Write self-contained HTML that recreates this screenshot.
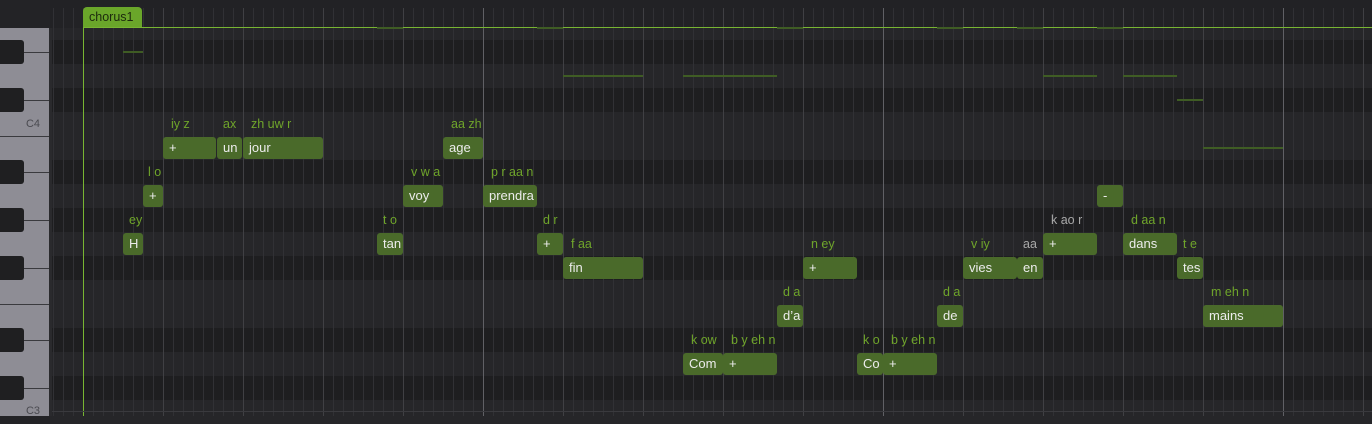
<!DOCTYPE html>
<html><head><style>
*{margin:0;padding:0;box-sizing:border-box}
body{width:1372px;height:416px;overflow:hidden;background:#232326;font-family:"Liberation Sans",sans-serif;position:relative}
#grid{position:absolute;left:50px;top:0;width:1322px;height:416px;
background:
repeating-linear-gradient(90deg,transparent 0,transparent 3px,#313135 3px,#313135 4px,transparent 4px,transparent 10px);
}
.row{position:absolute;left:50px;width:1322px;height:24px}
.blk{background:#1e1e20}
.wht{background:#262629}
.vl{position:absolute;top:8px;bottom:0;width:1px}
.key{position:absolute;left:0;width:49px;background:#8e8d95}
.bk{position:absolute;left:0;width:24px;height:24px;background:#1f1f21;border-radius:0 3px 3px 0}
.sep{position:absolute;left:0;width:49px;height:1px;background:#3a3a3e}
.n{position:absolute;height:22px;background:#4a6a2a;border-radius:3px;color:#ececec;font-size:13px;line-height:22px;padding-left:6px;white-space:nowrap;overflow:hidden}
.l{position:absolute;color:#6fa52a;font-size:12.5px;white-space:nowrap}
.g{color:#a8a8a8}
.p{position:absolute;height:2px;background:#3f5c24}
.lab{position:absolute;left:0;width:40px;text-align:right;font-size:11px;color:#4a4a50}
</style></head><body>
<div class="row" style="top:0;height:28px;background:#222225"></div>
<div class="row wht" style="top:28px;height:12px"></div>
<div class="row blk" style="top:40px"></div>
<div class="row wht" style="top:64px"></div>
<div class="row blk" style="top:88px"></div>
<div class="row wht" style="top:112px"></div>
<div class="row wht" style="top:136px"></div>
<div class="row blk" style="top:160px"></div>
<div class="row wht" style="top:184px"></div>
<div class="row blk" style="top:208px"></div>
<div class="row wht" style="top:232px"></div>
<div class="row blk" style="top:256px"></div>
<div class="row wht" style="top:280px"></div>
<div class="row wht" style="top:304px"></div>
<div class="row blk" style="top:328px"></div>
<div class="row wht" style="top:352px"></div>
<div class="row blk" style="top:376px"></div>
<div class="row wht" style="top:400px"></div>
<div id="grid"></div>
<div style="position:absolute;left:50px;top:0;width:1322px;height:8px;background:#222225"></div>
<div class="vl" style="left:163px;background:#404044"></div>
<div class="vl" style="left:243px;background:#404044"></div>
<div class="vl" style="left:323px;background:#404044"></div>
<div class="vl" style="left:403px;background:#404044"></div>
<div class="vl" style="left:483px;background:#606065"></div>
<div class="vl" style="left:563px;background:#404044"></div>
<div class="vl" style="left:643px;background:#404044"></div>
<div class="vl" style="left:723px;background:#404044"></div>
<div class="vl" style="left:803px;background:#404044"></div>
<div class="vl" style="left:883px;background:#606065"></div>
<div class="vl" style="left:963px;background:#404044"></div>
<div class="vl" style="left:1043px;background:#404044"></div>
<div class="vl" style="left:1123px;background:#404044"></div>
<div class="vl" style="left:1203px;background:#404044"></div>
<div class="vl" style="left:1283px;background:#606065"></div>
<div class="vl" style="left:1363px;background:#404044"></div>
<div class="vl" style="left:83px;top:27px;background:#78b532"></div>
<div style="position:absolute;left:83px;top:27px;width:1289px;height:1px;background:#78b532"></div>
<div style="position:absolute;left:50px;top:411px;width:1322px;height:1px;background:#3a3a3e"></div>
<div style="position:absolute;left:83px;top:7px;width:59px;height:20px;background:#6aa62a;border-radius:4px 4px 0 0;color:#1d2a0e;font-size:12.5px;line-height:21px;padding-left:6px">chorus1</div>
<div style="position:absolute;left:0;top:28px;width:52px;height:388px;background:#2a2a2d"></div>
<div class="key" style="top:28px;height:388px"></div>
<div class="sep" style="top:52px"></div>
<div class="sep" style="top:100px"></div>
<div class="sep" style="top:136px"></div>
<div class="sep" style="top:172px"></div>
<div class="sep" style="top:220px"></div>
<div class="sep" style="top:268px"></div>
<div class="sep" style="top:304px"></div>
<div class="sep" style="top:340px"></div>
<div class="sep" style="top:388px"></div>
<div class="bk" style="top:40px"></div>
<div class="bk" style="top:88px"></div>
<div class="bk" style="top:160px"></div>
<div class="bk" style="top:208px"></div>
<div class="bk" style="top:256px"></div>
<div class="bk" style="top:328px"></div>
<div class="bk" style="top:376px"></div>
<div class="lab" style="top:118px">C4</div>
<div class="lab" style="top:405px">C3</div>
<div class="p" style="left:123px;top:51px;width:20px"></div>
<div class="p" style="left:563px;top:75px;width:80px"></div>
<div class="p" style="left:683px;top:75px;width:94px"></div>
<div class="p" style="left:1043px;top:75px;width:54px"></div>
<div class="p" style="left:1123px;top:75px;width:54px"></div>
<div class="p" style="left:1177px;top:99px;width:26px"></div>
<div class="p" style="left:1203px;top:147px;width:80px"></div>
<div class="p" style="left:377px;top:27px;width:26px"></div>
<div class="p" style="left:537px;top:27px;width:26px"></div>
<div class="p" style="left:777px;top:27px;width:26px"></div>
<div class="p" style="left:937px;top:27px;width:26px"></div>
<div class="p" style="left:1017px;top:27px;width:26px"></div>
<div class="p" style="left:1097px;top:27px;width:26px"></div>
<div class="n" style="left:123px;top:233px;width:20px">H</div><div class="l" style="left:129px;top:213px">ey</div>
<div class="n" style="left:143px;top:185px;width:20px">+</div><div class="l" style="left:148px;top:165px">l o</div>
<div class="n" style="left:163px;top:137px;width:53px">+</div><div class="l" style="left:171px;top:117px">iy z</div>
<div class="n" style="left:217px;top:137px;width:25px">un</div><div class="l" style="left:223px;top:117px">ax</div>
<div class="n" style="left:243px;top:137px;width:80px">jour</div><div class="l" style="left:251px;top:117px">zh uw r</div>
<div class="n" style="left:377px;top:233px;width:26px">tan</div><div class="l" style="left:383px;top:213px">t o</div>
<div class="n" style="left:403px;top:185px;width:40px">voy</div><div class="l" style="left:411px;top:165px">v w a</div>
<div class="n" style="left:443px;top:137px;width:40px">age</div><div class="l" style="left:451px;top:117px">aa zh</div>
<div class="n" style="left:483px;top:185px;width:54px">prendra</div><div class="l" style="left:491px;top:165px">p r aa n</div>
<div class="n" style="left:537px;top:233px;width:26px">+</div><div class="l" style="left:543px;top:213px">d r</div>
<div class="n" style="left:563px;top:257px;width:80px">fin</div><div class="l" style="left:571px;top:237px">f aa</div>
<div class="n" style="left:683px;top:353px;width:40px">Com</div><div class="l" style="left:691px;top:333px">k ow</div>
<div class="n" style="left:723px;top:353px;width:54px">+</div><div class="l" style="left:731px;top:333px">b y eh n</div>
<div class="n" style="left:777px;top:305px;width:26px">d’a</div><div class="l" style="left:783px;top:285px">d a</div>
<div class="n" style="left:803px;top:257px;width:54px">+</div><div class="l" style="left:811px;top:237px">n ey</div>
<div class="n" style="left:857px;top:353px;width:26px">Co</div><div class="l" style="left:863px;top:333px">k o</div>
<div class="n" style="left:883px;top:353px;width:54px">+</div><div class="l" style="left:891px;top:333px">b y eh n</div>
<div class="n" style="left:937px;top:305px;width:26px">de</div><div class="l" style="left:943px;top:285px">d a</div>
<div class="n" style="left:963px;top:257px;width:54px">vies</div><div class="l" style="left:971px;top:237px">v iy</div>
<div class="n" style="left:1017px;top:257px;width:26px">en</div><div class="l g" style="left:1023px;top:237px">aa</div>
<div class="n" style="left:1043px;top:233px;width:54px">+</div><div class="l g" style="left:1051px;top:213px">k ao r</div>
<div class="n" style="left:1097px;top:185px;width:26px">-</div>
<div class="n" style="left:1123px;top:233px;width:54px">dans</div><div class="l" style="left:1131px;top:213px">d aa n</div>
<div class="n" style="left:1177px;top:257px;width:26px">tes</div><div class="l" style="left:1183px;top:237px">t e</div>
<div class="n" style="left:1203px;top:305px;width:80px">mains</div><div class="l" style="left:1211px;top:285px">m eh n</div>
</body></html>
